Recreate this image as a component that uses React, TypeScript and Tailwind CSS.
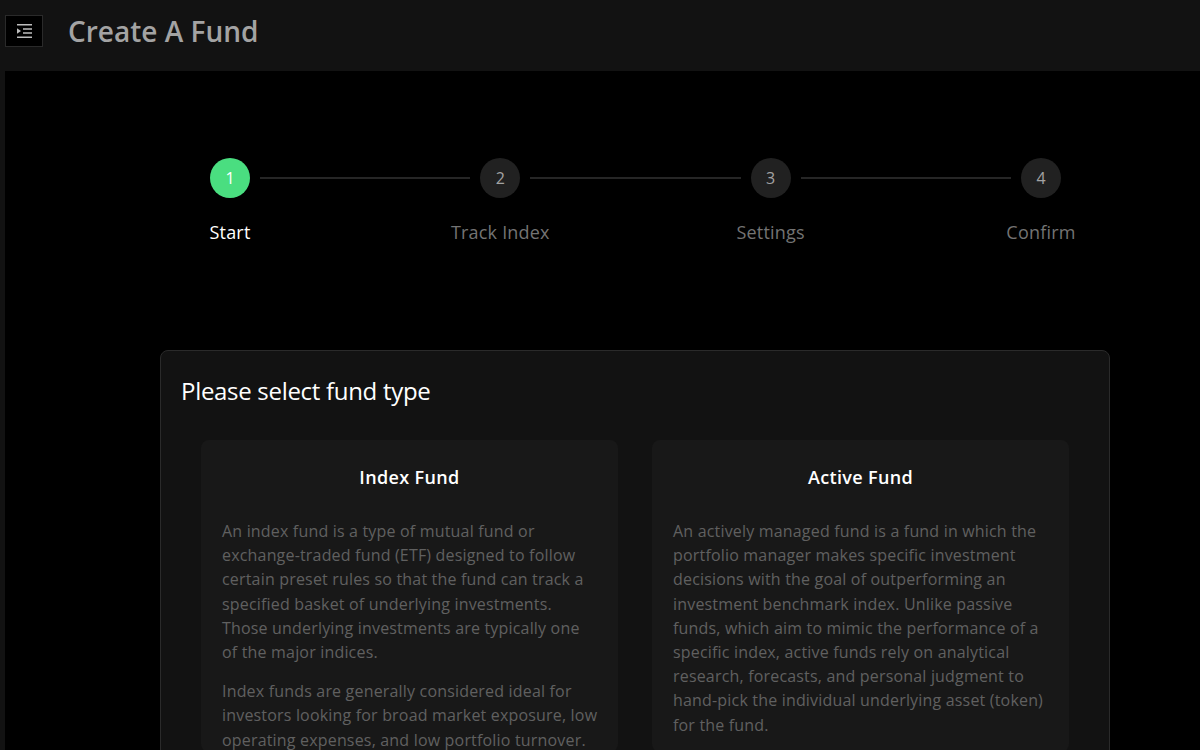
import React from "react";

const steps = ["Start", "Track Index", "Settings", "Confirm"];

function Step({ n, label, active }: { n: number; label: string; active?: boolean }) {
  return (
    <div className="flex w-[120px] shrink-0 flex-col items-center">
      <div className={`flex h-10 w-10 items-center justify-center rounded-full text-[16px] ${active ? "bg-[#4ade80] text-white" : "bg-[#212121] text-[#a3a3a3]"}`}>{n}</div>
      <div className={`mt-[22px] whitespace-nowrap text-[18px] leading-[24px] tracking-[0.2px] ${active ? "text-white" : "text-[#737373]"}`}>{label}</div>
    </div>
  );
}

export default function App() {
  return (
    <div className="flex h-[750px] w-[1200px] flex-col overflow-hidden bg-[#121212] font-['Open_Sans',sans-serif]">
      <header className="flex h-[71px] shrink-0 items-center bg-[#121212] pb-[9px]">
        <button className="ml-[5px] flex h-[32px] w-[38px] items-center justify-center border border-[#2a2a2a] bg-black text-[#bdbdbd]">
          <svg width="15" height="14" viewBox="0 0 15 14" fill="none">
            <path d="M0 .8h15M6 4.9h9M6 9.1h9M0 13.2h15" stroke="currentColor" strokeWidth="1.5" />
            <path d="M0 4.2 4 7 0 9.8z" fill="currentColor" />
          </svg>
        </button>
        <h1 className="ml-[25px] text-[28px] font-semibold leading-[38px] text-[#a3a3a3]">Create A Fund</h1>
      </header>
      <div className="ml-[5px] flex-1 overflow-hidden bg-black pl-[155px] pr-[90px] pt-[87px]">
        <div className="-mr-px flex items-start px-[10px]">
          {steps.map((s, i) => (
            <React.Fragment key={s}>
              <Step n={i + 1} label={s} active={i === 0} />
              {i < 3 && <div className="mx-[-30px] mt-[19px] h-[2px] flex-1 bg-[#262626]" />}
            </React.Fragment>
          ))}
        </div>
        <section className="mt-[106px] rounded-lg border border-[#2a2a2a] bg-[#121212] pb-10 pl-[40px] pr-[40px] pt-[20px]">
          <h2 className="-ml-[20px] text-[24px] leading-[40px] tracking-[-0.3px] text-white">Please select fund type</h2>
          <div className="mt-[29px] flex gap-[34px]">
            <article className="w-[417px] rounded-lg bg-[#181818] pl-[21px] pr-[19px] pt-[23px]">
              <h3 className="mr-[2px] text-center text-[18px] font-semibold leading-[28px] tracking-[0.35px] text-white">Index Fund</h3>
              <div className="mt-[28px] text-[16px] leading-[24.19px] tracking-[0.18px] text-[#606060]">
                <p>An index fund is a type of mutual fund or exchange-traded fund (ETF) designed to follow certain preset rules so that the fund can track a specified basket of underlying investments. Those underlying investments are typically one of the major indices.</p>
                <p className="mt-[15px]">Index funds are generally considered ideal for investors looking for broad market exposure, low operating expenses, and low portfolio turnover.</p>
              </div>
            </article>
            <article className="w-[417px] rounded-lg bg-[#181818] pl-[21px] pr-[19px] pt-[23px]">
              <h3 className="mr-[2px] text-center text-[18px] font-semibold leading-[28px] tracking-[0.35px] text-white">Active Fund</h3>
              <div className="mt-[28px] text-[16px] leading-[24.19px] tracking-[0.18px] text-[#606060]">
                <p>An actively managed fund is a fund in which the portfolio manager makes specific investment decisions with the goal of outperforming an investment benchmark index. Unlike passive funds, which aim to mimic the performance of a specific index, active funds rely on analytical research, forecasts, and personal judgment to hand-pick the individual underlying asset (token) for the fund.</p>
              </div>
            </article>
          </div>
        </section>
      </div>
    </div>
  );
}
